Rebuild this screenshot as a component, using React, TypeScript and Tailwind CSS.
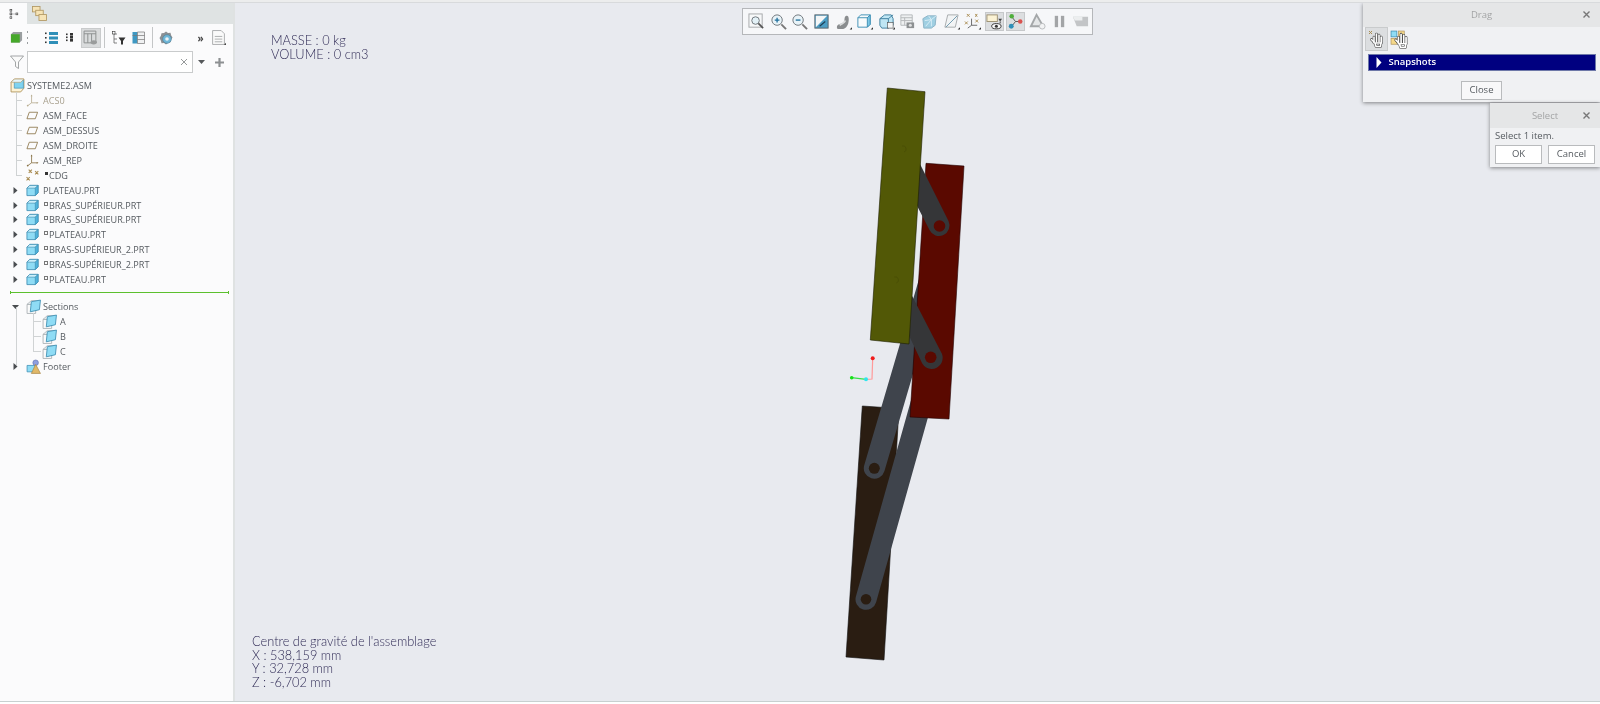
import type { ReactNode } from 'react'

// petites icônes Creo dessinées à la main
function Ico({ size = 14, box = 14, children }: { size?: number; box?: number; children: ReactNode }) {
  return (
    <svg width={size} height={size} viewBox={`0 0 ${box} ${box}`} className="block shrink-0">
      {children}
    </svg>
  )
}

const PartIcon = () => (
  <Ico size={13}>
    <path d="M1 4.5 4 1.5h9v8l-3 3H1z" fill="#8fdcf5" stroke="#3d8db2" strokeWidth="0.9" />
    <path d="M1 4.5 4 1.5h9l-3 3z" fill="#cdf0fb" stroke="#3d8db2" strokeWidth="0.7" />
    <path d="M10 4.5v8l3-3v-8z" fill="#4fb4dc" stroke="#3d8db2" strokeWidth="0.7" />
  </Ico>
)

const RootIcon = () => (
  <Ico size={15}>
    <path d="M1 4 4 1h9v8.5l-3 3.5H1z" fill="#fdf3d6" stroke="#b49a66" strokeWidth="0.9" />
    <path d="M4 2h8.5v7.5H4z" fill="#7fd3f0" stroke="#3d8db2" strokeWidth="0.6" />
    <path d="M1 4 4 1h9l-3 3z" fill="#e6f6fc" stroke="#b49a66" strokeWidth="0.6" />
  </Ico>
)

const SectionIcon = () => (
  <Ico size={15}>
    <path d="M1 5h8v8.5H1z" fill="#fafafa" stroke="#a9aeb2" strokeWidth="0.8" />
    <path d="M1 5l4-3.5h8L9 5z" fill="#eef2f4" stroke="#a9aeb2" strokeWidth="0.7" />
    <path d="M5 2.5 13.5 1 12.5 10 4 12z" fill="#8fdcf5" stroke="#3d8db2" strokeWidth="0.8" />
  </Ico>
)

const PlaneIcon = () => (
  <Ico size={13}>
    <path d="M3.5 3.5h9l-2.5 7H1z" fill="#fbfbfc" stroke="#8a7448" strokeWidth="0.9" />
  </Ico>
)

const AxesIcon = ({ muted = false }: { muted?: boolean }) => {
  const c = muted ? '#b9ae93' : '#8a7448'
  return (
    <Ico size={13}>
      <path d="M6 1.5v8M6 9.5h6.5M6 9.5l-4 3" fill="none" stroke={c} strokeWidth="0.9" />
      <path d="M6 0.5 7 2.5H5zM13.5 9.5l-2-1v2z" fill={c} />
      <circle cx="1.8" cy="12.5" r="0.9" fill={c} />
    </Ico>
  )
}

const CrossesIcon = () => (
  <Ico size={15}>
    <g stroke="#a98c52" strokeWidth="1" fill="none">
      <path d="M2.5 1.5l3 3M5.5 1.5l-3 3M8.5 3l3 3M11.5 3l-3 3M0.5 8.5l3 3M3.5 8.5l-3 3" />
    </g>
  </Ico>
)

const FooterIcon = () => (
  <Ico size={15}>
    <path d="M1 6h8v6H1z" fill="#8fdcf5" stroke="#3d8db2" strokeWidth="0.7" />
    <circle cx="9" cy="3.5" r="2.6" fill="#8f9fe0" stroke="#5566a8" strokeWidth="0.5" />
    <path d="M9 5 13.5 13.5H5z" fill="#e0b868" stroke="#a58240" strokeWidth="0.6" />
  </Ico>
)

const Arrow = ({ down = false }: { down?: boolean }) => (
  <svg width="7" height="7" viewBox="0 0 7 7" className="block">
    <path d={down ? 'M0 2h7L3.5 6z' : 'M1.5 0 5.5 3.5 1.5 7z'} fill="#4a4d50" />
  </svg>
)

// main de l'outil Drag : contour sombre puis remplissage blanc
const Hand = ({ x = 0, y = 0 }: { x?: number; y?: number }) => {
  const shape = (
    <>
      <path d="M6 7v6M8.5 4v8M11 5v7M13.2 7v6" />
      <path d="M6 12 3.5 9.5" />
      <path d="M7 13h6l-.5 3.5H8z" />
    </>
  )
  return (
    <g transform={`translate(${x} ${y})`} fill="none" strokeLinecap="round" strokeLinejoin="round">
      <g stroke="#3a3a3a" strokeWidth="2.6">{shape}</g>
      <g stroke="#fff" strokeWidth="1.6">{shape}</g>
    </g>
  )
}

type Row = {
  label: string
  icon: ReactNode
  branch?: boolean
  last?: boolean
  arrow?: boolean
  mark?: 'box' | 'dot'
  muted?: boolean
}

const rows: Row[] = [
  { label: 'ACS0', icon: <AxesIcon muted />, branch: true, muted: true },
  { label: 'ASM_FACE', icon: <PlaneIcon />, branch: true },
  { label: 'ASM_DESSUS', icon: <PlaneIcon />, branch: true },
  { label: 'ASM_DROITE', icon: <PlaneIcon />, branch: true },
  { label: 'ASM_REP', icon: <AxesIcon />, branch: true },
  { label: 'CDG', icon: <CrossesIcon />, branch: true, last: true, mark: 'dot' },
  { label: 'PLATEAU.PRT', icon: <PartIcon />, arrow: true },
  { label: 'BRAS_SUPÉRIEUR.PRT', icon: <PartIcon />, arrow: true, mark: 'box' },
  { label: 'BRAS_SUPÉRIEUR.PRT', icon: <PartIcon />, arrow: true, mark: 'box' },
  { label: 'PLATEAU.PRT', icon: <PartIcon />, arrow: true, mark: 'box' },
  { label: 'BRAS-SUPÉRIEUR_2.PRT', icon: <PartIcon />, arrow: true, mark: 'box' },
  { label: 'BRAS-SUPÉRIEUR_2.PRT', icon: <PartIcon />, arrow: true, mark: 'box' },
  { label: 'PLATEAU.PRT', icon: <PartIcon />, arrow: true, mark: 'box' },
]

function TreeRow({ row }: { row: Row }) {
  return (
    <div className="flex h-[14.9px] items-center">
      <div className="relative flex h-full w-[26px] shrink-0 items-center">
        {row.branch && (
          <>
            <div className={`absolute left-[16px] top-[-1px] w-px bg-[#cfd2d3] ${row.last ? 'h-[8.5px]' : 'h-[16px]'}`} />
            <div className="absolute left-[16px] top-[7px] h-px w-[6px] bg-[#cfd2d3]" />
          </>
        )}
        {row.arrow && (
          <div className="ml-[12px]">
            <Arrow />
          </div>
        )}
      </div>
      <div className="flex w-[17px] shrink-0 items-center">{row.icon}</div>
      {row.mark === 'box' && <div className="mr-[1px] mb-[3px] ml-[1px] h-[4px] w-[4px] border border-[#777]" />}
      {row.mark === 'dot' && <div className="mb-[3px] ml-[2px] mr-[1px] h-[3px] w-[3px] bg-[#333]" />}
      <span className={row.muted ? 'text-[#a9a18f]' : 'text-[#555a5f]'}>{row.label}</span>
    </div>
  )
}

function SectionRow({ label, last = false }: { label: string; last?: boolean }) {
  return (
    <div className="flex h-[14.7px] items-center">
      <div className="relative h-full w-[42px] shrink-0">
        <div className={`absolute left-[33px] top-[-1px] w-px bg-[#d0d3d4] ${last ? 'h-[8.5px]' : 'h-[16px]'}`} />
        <div className="absolute left-[33px] top-[7px] h-px w-[8px] bg-[#d0d3d4]" />
      </div>
      <div className="w-[18px] shrink-0">
        <SectionIcon />
      </div>
      <span className="text-[#555a5f]">{label}</span>
    </div>
  )
}

function SideToolbar() {
  return (
    <div className="flex h-[27px] items-center pl-[10px]">
      <Ico size={13}>
        <path d="M1 3.5 3.5 1H13v9l-2.5 2.5H1z" fill="#9a9ea0" />
        <path d="M1 3.5h9.5v9H1z" fill="#46a82a" />
      </Ico>
      <div className="ml-[3.5px] flex h-[13px] flex-col justify-between">
        <div className="h-[2px] w-[1px] bg-[#9a9ea0]" />
        <div className="h-[2px] w-[1px] bg-[#9a9ea0]" />
        <div className="h-[2px] w-[1px] bg-[#9a9ea0]" />
      </div>
      <div className="ml-[17px]">
        <Ico size={14}>
          <g fill="#333">
            <rect x="0" y="1.5" width="1.6" height="1.6" />
            <rect x="0" y="6" width="1.6" height="1.6" />
            <rect x="0" y="10.5" width="1.6" height="1.6" />
          </g>
          <g fill="#2f8fb8">
            <rect x="4" y="1" width="9" height="3" />
            <rect x="4" y="5.5" width="9" height="3" />
            <rect x="4" y="10" width="9" height="3" />
          </g>
        </Ico>
      </div>
      <div className="ml-[7px]">
        <Ico size={9} box={9}>
          <g fill="#333">
            <rect x="0" y="0.5" width="1.6" height="1.6" />
            <rect x="0" y="3.5" width="1.6" height="1.6" />
            <rect x="0" y="6.5" width="1.6" height="1.6" />
            <rect x="4" y="0" width="3" height="2.6" />
            <rect x="4" y="3" width="3" height="2.6" />
            <rect x="4" y="6" width="3" height="2.6" />
          </g>
        </Ico>
      </div>
      <div className="ml-[6px] flex h-[20px] w-[20px] items-center justify-center border border-[#c9cbcc] bg-[#d9dbdc]">
        <Ico size={15}>
          <path d="M1 1h11v11H1zM1 3.5h11M4.5 3.5V12M8 3.5V12" fill="none" stroke="#8d9090" strokeWidth="0.9" />
          <ellipse cx="10" cy="11.5" rx="3" ry="2" fill="#9a9c9c" />
        </Ico>
      </div>
      <div className="ml-[3px] h-[21px] w-px bg-[#c4c6c7]" />
      <div className="ml-[7px]">
        <Ico size={14}>
          <path d="M2 1v11M2 3h3M2 8h3M2 12h3" fill="none" stroke="#666" strokeWidth="0.8" />
          <path d="M6.5 6.5h7L11 10v3.5H9V10z" fill="#333" />
          <rect x="0.5" y="0.5" width="2.5" height="2.5" fill="#fff" stroke="#333" strokeWidth="0.6" />
        </Ico>
      </div>
      <div className="ml-[6px]">
        <Ico size={14}>
          <rect x="0.5" y="1" width="5" height="11.5" fill="#3f98c2" />
          <path d="M5.5 1h7v11.5h-7z" fill="#f0f1f2" stroke="#777" strokeWidth="0.7" />
          <path d="M0.5 4.5h12M5.5 8.5h7" stroke="#777" strokeWidth="0.7" />
        </Ico>
      </div>
      <div className="ml-[6px] h-[21px] w-px bg-[#c4c6c7]" />
      <div className="ml-[6px]">
        <Ico size={14}>
          <path d="M7 0.5 9 2l2.5-.3.6 2.5 1.4 2.3-1.4 2.3-.6 2.5L9 12 7 13.5 5 12l-2.5.3-.6-2.5L.5 7l1.4-2.3.6-2.5L5 2z" fill="#8b9094" />
          <circle cx="8" cy="8" r="4.3" fill="#6fb7d8" stroke="#4b7f9a" strokeWidth="0.6" />
          <circle cx="8" cy="8" r="1.8" fill="#eef3f5" />
        </Ico>
      </div>
      <span className="ml-[25px] w-[8px] text-[10px] font-bold leading-none text-[#444]">»</span>
      <div className="ml-[5px]">
        <Ico size={15}>
          <path d="M1.5 0.5h8l3 3v10h-11z" fill="#fafafa" stroke="#a3a5a6" strokeWidth="0.8" />
          <path d="M3.5 6h7M3.5 8.5h7M3.5 11h7" stroke="#a3a5a6" strokeWidth="0.8" />
          <path d="M12 14h2v-2z" fill="#444" />
        </Ico>
      </div>
    </div>
  )
}

function FilterRow() {
  return (
    <div className="flex h-[22px] items-center pl-[10px]">
      <Ico size={14}>
        <path d="M0.5 1h13L8.5 7v6.5L5.5 11.5V7z" fill="#fafafa" stroke="#8d9092" strokeWidth="0.8" />
      </Ico>
      <div className="ml-[3px] flex h-[22px] w-[166px] items-center justify-end border border-[#c9cbcc] bg-white pr-[4px]">
        <svg width="8" height="8" viewBox="0 0 8 8">
          <path d="M1 1l6 6M7 1 1 7" stroke="#8a8d8f" strokeWidth="0.9" />
        </svg>
      </div>
      <svg width="7" height="4" viewBox="0 0 7 4" className="ml-[5px]">
        <path d="M0 0h7L3.5 4z" fill="#55585a" />
      </svg>
      <svg width="9" height="9" viewBox="0 0 9 9" className="ml-[10px]">
        <path d="M3.4 0h2.2v3.4H9v2.2H5.6V9H3.4V5.6H0V3.4h3.4z" fill="#8d9092" />
      </svg>
    </div>
  )
}

function Sidebar() {
  return (
    <aside className="flex w-[233px] shrink-0 flex-col bg-[#fbfbfc] font-['Open_Sans',sans-serif] text-[9.1px] leading-none">
      <div className="flex h-[21px] bg-[#dfe3e3]">
        <div className="flex w-[27px] items-center justify-center bg-[#fbfbfc]">
          <Ico size={10} box={10}>
            <path d="M2 1v8M2 5h5" stroke="#999" strokeWidth="0.6" fill="none" />
            <g fill="#fff" stroke="#333" strokeWidth="0.6">
              <rect x="1" y="0.3" width="1.8" height="1.8" />
              <rect x="1" y="4" width="1.8" height="1.8" />
              <rect x="1" y="7.8" width="1.8" height="1.8" />
              <rect x="7" y="4" width="1.8" height="1.8" />
            </g>
          </Ico>
        </div>
        <div className="ml-[5px] flex items-center">
          <Ico size={15}>
            <g fill="#f6e3b5" stroke="#b29863" strokeWidth="0.8">
              <rect x="0.5" y="0.5" width="7" height="5" />
              <rect x="3.5" y="4" width="7" height="5" />
              <rect x="6.5" y="8" width="7" height="5.5" />
            </g>
          </Ico>
        </div>
      </div>
      <SideToolbar />
      <FilterRow />
      <div className="mt-[5.5px] flex h-[14.9px] items-center pl-[10px]">
        <div className="w-[17px] shrink-0">
          <RootIcon />
        </div>
        <span className="text-[#555a5f]">SYSTEME2.ASM</span>
      </div>
      {rows.map((r, i) => (
        <TreeRow key={i} row={r} />
      ))}
      <div className="mx-[10px] mt-[4px] flex h-[3px] w-[219px] items-center justify-between border-x border-[#5cc02e]">
        <div className="h-px w-full bg-[#5cc02e]" />
      </div>
      <div className="relative mt-[5.5px]">
        <div className="absolute left-[16px] top-[8px] h-[58px] w-px bg-[#d0d3d4]" />
        <div className="flex h-[14.9px] items-center">
          <div className="w-[26px] shrink-0 pl-[12px]">
            <Arrow down />
          </div>
          <div className="w-[17px] shrink-0">
            <SectionIcon />
          </div>
          <span className="text-[#555a5f]">Sections</span>
        </div>
        <SectionRow label="A" />
        <SectionRow label="B" />
        <SectionRow label="C" last />
        <div className="flex h-[15.5px] items-center">
          <div className="w-[26px] shrink-0 pl-[12px]">
            <Arrow />
          </div>
          <div className="w-[17px] shrink-0">
            <FooterIcon />
          </div>
          <span className="text-[#555a5f]">Footer</span>
        </div>
      </div>
    </aside>
  )
}

const tick = <path d="M15.5 17.5h2.5v-2.5z" fill="#333" />

const toolIcons: { icon: ReactNode; active?: boolean }[] = [
  {
    icon: (
      <>
        <rect x="1" y="1" width="14" height="14" fill="#f7f8f9" stroke="#a5a8aa" />
        <circle cx="8" cy="8" r="4" fill="#e3f1f7" stroke="#6c7479" />
        <path d="M11 11l5 5" stroke="#555" strokeWidth="1.8" />
      </>
    ),
  },
  {
    icon: (
      <>
        <circle cx="7.5" cy="7.5" r="5.5" fill="#e8f3f8" stroke="#6c7479" />
        <path d="M5 7.5h5M7.5 5v5" stroke="#1f6f9c" strokeWidth="1.4" />
        <path d="M12 12l5 5" stroke="#777" strokeWidth="2" />
      </>
    ),
  },
  {
    icon: (
      <>
        <circle cx="7.5" cy="7.5" r="5.5" fill="#e8f3f8" stroke="#6c7479" />
        <path d="M5 7.5h5" stroke="#1f6f9c" strokeWidth="1.4" />
        <path d="M12 12l5 5" stroke="#777" strokeWidth="2" />
      </>
    ),
  },
  {
    icon: (
      <>
        <rect x="2" y="2" width="14" height="14" fill="#4b9dc4" stroke="#56636b" />
        <path d="M3 3h12L3 15z" fill="#f3f6f7" />
        <path d="M7 14l6-5" stroke="#1d3f55" strokeWidth="1.2" />
      </>
    ),
  },
  {
    icon: (
      <>
        <path d="M2 15c0-4 5-3 7-5s0-6 3-7 3 5 2 8-3 6-7 6-5 0-5-2z" fill="#8a8d8f" />
        <path d="M5 13c2-2 5-2 6-5" stroke="#dadcdd" strokeWidth="1.8" fill="none" />
        {tick}
      </>
    ),
  },
  {
    icon: (
      <>
        <path d="M2 5l3-3h10v10l-3 3H2z" fill="#f8fbfc" stroke="#3f8fb5" />
        <path d="M12 5v10l3-3V2z" fill="#7cc8e6" stroke="#3f8fb5" />
        <path d="M2 5h10l3-3" fill="none" stroke="#3f8fb5" />
        {tick}
      </>
    ),
  },
  {
    icon: (
      <>
        <path d="M2 6l5-4h7l2 4v7l-5 3H4l-2-3z" fill="#bfe6f4" stroke="#3f7f9f" />
        <path d="M2 6h9l5-4M11 6v10" fill="none" stroke="#3f7f9f" />
        <rect x="10" y="10" width="6" height="6" fill="#f4f5f5" stroke="#555" strokeWidth="0.7" />
        {tick}
      </>
    ),
  },
  {
    icon: (
      <>
        <path d="M2 2h12v11H2zM2 5h12M2 8h12M6 5v8" fill="#eef0f1" stroke="#b5b8ba" />
        <rect x="8" y="10" width="8" height="6" fill="#8d9092" />
        <circle cx="12" cy="13" r="1.6" fill="#dfe1e2" />
      </>
    ),
  },
  {
    icon: (
      <>
        <path d="M2 6l5-3h9l-1 10-4 3H3z" fill="#9fcfe2" stroke="#8ab3c6" />
        <path d="M4 8l7-1v7M8 3l3 4 5-4M5 14l6-7" fill="none" stroke="#d8edf5" />
      </>
    ),
  },
  {
    icon: (
      <>
        <path d="M5 2h11l-3 13H2z" fill="#f2f4f5" stroke="#a7aaac" />
        <path d="M3 15 15 3" stroke="#6f99ae" />
        {tick}
      </>
    ),
  },
  {
    icon: (
      <>
        <path d="M8 6v7M8 13h6M8 13l-4 3" fill="none" stroke="#444" strokeWidth="0.8" />
        <path d="M3 1l3 3M6 1 3 4M12 1l2 3M14 1l-2 3M1 9l3 3M4 9l-3 3M12 7l3 3M15 7l-3 3" stroke="#a98c52" />
        {tick}
      </>
    ),
  },
  {
    active: true,
    icon: (
      <>
        <rect x="1" y="2" width="11" height="7" fill="#fbf2d4" stroke="#9c9072" />
        <path d="M13 6h4l-2 3z" fill="#444" />
        <path d="M15 9v2" stroke="#444" />
        <ellipse cx="11" cy="14" rx="5" ry="2.8" fill="#f7f7f7" stroke="#333" />
        <circle cx="11" cy="14" r="1.6" fill="#333" />
      </>
    ),
  },
  {
    active: true,
    icon: (
      <>
        <path d="M5 4 9 9 5 14M9 9h5" fill="none" stroke="#555" />
        <circle cx="5" cy="3.5" r="2.4" fill="#4fae3c" />
        <circle cx="4.5" cy="14" r="2.6" fill="#2f8fb8" />
        <circle cx="14" cy="9" r="2.4" fill="#d9534f" />
      </>
    ),
  },
  {
    icon: (
      <>
        <path d="M8 2 15 14H2z" fill="#e4e6e7" stroke="#a4a7a9" strokeWidth="2" />
        <circle cx="14" cy="14" r="3" fill="#f2f3f4" stroke="#b9bbbd" />
      </>
    ),
  },
  {
    icon: (
      <>
        <rect x="4" y="3" width="3.5" height="12" fill="#a3a5a7" />
        <rect x="10.5" y="3" width="3.5" height="12" fill="#a3a5a7" />
      </>
    ),
  },
  {
    icon: (
      <>
        <path d="M1 4h16v10H5z" fill="#c3c5c7" />
        <path d="M1 4h10v4H3z" fill="#eceeef" />
      </>
    ),
  },
]

function ViewToolbar() {
  return (
    <div className="absolute left-[507px] top-[5px] flex h-[27px] w-[351px] items-center border border-[#b5b7ba] bg-[#f6f7f9] pl-[3px]">
      {toolIcons.map((t, i) => (
        <div key={i} className="flex h-[19px] w-[21.6px] shrink-0 items-center justify-center">
          <div
            className={`flex h-[19px] w-[19px] items-center justify-center ${t.active ? 'border border-[#c6c8ca] bg-[#dcdee0]' : ''}`}
          >
            <Ico size={17} box={18}>
              {t.icon}
            </Ico>
          </div>
        </div>
      ))}
    </div>
  )
}

// vue 3D du mécanisme, coordonnées en pixels de la page
function Model() {
  return (
    <svg viewBox="235 3 1365 698" className="absolute inset-0 h-full w-full">
      <path d="M862.3 406 899 408.5 884 660 846 657z" fill="#2a1d12" stroke="#111" strokeWidth="0.6" />
      <g stroke="#3f444c" strokeWidth="21" strokeLinecap="round">
        <path d="M874.3 468.3 935 262" />
        <path d="M866 599.3 936 350" />
      </g>
      <circle cx="874.3" cy="468.3" r="5.5" fill="#2a1d12" />
      <circle cx="866" cy="599.3" r="5.3" fill="#2a1d12" />
      <path d="M926 163.3 964 166 949 419 910 417z" fill="#5a0900" stroke="#200" strokeWidth="0.6" />
      <path d="M918 160 948.5 221a10.5 10.5 0 1 1-19 9L912 196z" fill="#353638" />
      <circle cx="939.5" cy="226" r="5.8" fill="#5a0900" />
      <path d="M908 288 941 352a11 11 0 1 1-19.5 10L904 325z" fill="#353638" />
      <circle cx="930.7" cy="357.3" r="5.8" fill="#5a0900" />
      <path d="M887.3 88 925 91.7 909 344 870.3 340z" fill="#525806" stroke="#1c1e00" strokeWidth="0.6" />
      <path d="M902 146a3 3 0 0 1 2 6" fill="none" stroke="#4a4f05" />
      <path d="M894.3 277a3 3 0 0 1 2 6" fill="none" stroke="#4a4f05" />
      <path d="M872.7 358.3 872 379 866 379.3" fill="none" stroke="#ff9a9a" strokeWidth="1.2" />
      <path d="M851.7 377.7 866 379.3" stroke="#35e04a" strokeWidth="1.2" />
      <circle cx="872.7" cy="358.3" r="2" fill="#f01c1c" />
      <circle cx="851.7" cy="377.7" r="1.8" fill="#17e017" />
      <circle cx="866" cy="379.3" r="2" fill="#2fe5ee" />
    </svg>
  )
}

function Dialogs() {
  return (
    <div className="font-['Open_Sans',sans-serif] text-[9.5px] leading-none text-[#555a5f]">
      <div className="absolute right-0 top-0 flex h-[99px] w-[237px] flex-col bg-[#f0f1f3] shadow-[0_1px_4px_rgba(0,0,0,0.45)]">
        <div className="relative flex h-[24px] shrink-0 items-center justify-center bg-[#e5e6e7] text-[#a3a4a5]">
          Drag
          <svg width="7" height="7" viewBox="0 0 7 7" className="absolute right-[10px] top-[8px]">
            <path d="M0.5 0.5l6 6M6.5 0.5l-6 6" stroke="#777" strokeWidth="1.4" />
          </svg>
        </div>
        <div className="flex h-[24px] shrink-0 items-center pl-[2px]">
          <div className="flex h-[24px] w-[23px] items-center justify-center border border-[#c9cbcc] bg-[#dcdee0]">
            <Ico size={18} box={18}>
              <path d="M1 1l3 3M4 1 1 4" stroke="#a98c52" strokeWidth="1" />
              <Hand />
            </Ico>
          </div>
          <div className="ml-[2px]">
            <Ico size={19} box={18}>
              <rect x="1" y="1" width="5.5" height="5.5" fill="#8fdcf5" stroke="#3d8db2" strokeWidth="0.7" />
              <rect x="8" y="1" width="5.5" height="5.5" fill="#f6d98a" stroke="#b29863" strokeWidth="0.7" />
              <rect x="1" y="8" width="5.5" height="5.5" fill="#f6d98a" stroke="#b29863" strokeWidth="0.7" />
              <Hand x={2} y={0} />
            </Ico>
          </div>
        </div>
        <div className="mx-[4.5px] mt-[2.5px] flex h-[17px] shrink-0 items-center border border-[#6e78a8] bg-[#000080] pl-[7px] font-semibold text-white">
          <svg width="6" height="11" viewBox="0 0 6 11">
            <path d="M0.5 0 5.5 5.5 0.5 11z" fill="#fff" />
          </svg>
          <span className="ml-[7px]">Snapshots</span>
        </div>
        <div className="flex flex-1 items-start justify-center pt-[10px]">
          <div className="flex h-[19px] w-[41px] items-center justify-center border border-[#b9bbbd] bg-[#f8f8f9]">Close</div>
        </div>
      </div>
      <div className="absolute right-0 top-[100px] flex h-[64px] w-[110px] flex-col bg-[#f0f1f3] shadow-[0_1px_4px_rgba(0,0,0,0.45)]">
        <div className="relative flex h-[25px] shrink-0 items-center justify-center bg-[#e5e6e7] text-[#a3a4a5]">
          Select
          <svg width="7" height="7" viewBox="0 0 7 7" className="absolute right-[10px] top-[9px]">
            <path d="M0.5 0.5l6 6M6.5 0.5l-6 6" stroke="#777" strokeWidth="1.4" />
          </svg>
        </div>
        <div className="mt-[3px] pl-[5px]">Select 1 item.</div>
        <div className="mt-[4px] flex gap-[6px] pl-[5px]">
          <div className="flex h-[19px] w-[47px] items-center justify-center border border-[#b9bbbd] bg-white">OK</div>
          <div className="flex h-[19px] w-[47px] items-center justify-center border border-[#b9bbbd] bg-white">Cancel</div>
        </div>
      </div>
    </div>
  )
}

function Viewport() {
  return (
    <main className="relative flex-1 overflow-hidden bg-[#e8eaef]">
      <Model />
      <ViewToolbar />
      <div className="absolute left-[36px] top-[30px] font-['Lato',sans-serif] text-[12.8px] font-light leading-[14.3px] text-[#2f2a55]">
        <div>MASSE : 0 kg</div>
        <div>VOLUME : 0 cm3</div>
      </div>
      <div className="absolute left-[17px] top-[632px] font-['Lato',sans-serif] text-[12.8px] font-light leading-[13.6px] text-[#2f2a55]">
        <div>Centre de gravité de l&apos;assemblage</div>
        <div>X : 538,159 mm</div>
        <div>Y : 32,728 mm</div>
        <div>Z : -6,702 mm</div>
      </div>
      <Dialogs />
    </main>
  )
}

export default function App() {
  return (
    <div className="flex h-[704px] w-[1600px] flex-col overflow-hidden bg-white blur-[0.35px]">
      <div className="h-[3px] shrink-0 border-b border-[#d8dadc] bg-[#eceded]" />
      <div className="flex h-[698px] shrink-0">
        <Sidebar />
        <div className="w-[2px] shrink-0 bg-[#dfe2e2]" />
        <Viewport />
      </div>
      <div className="h-[3px] shrink-0 border-t border-[#c8d0d0] bg-white" />
    </div>
  )
}
